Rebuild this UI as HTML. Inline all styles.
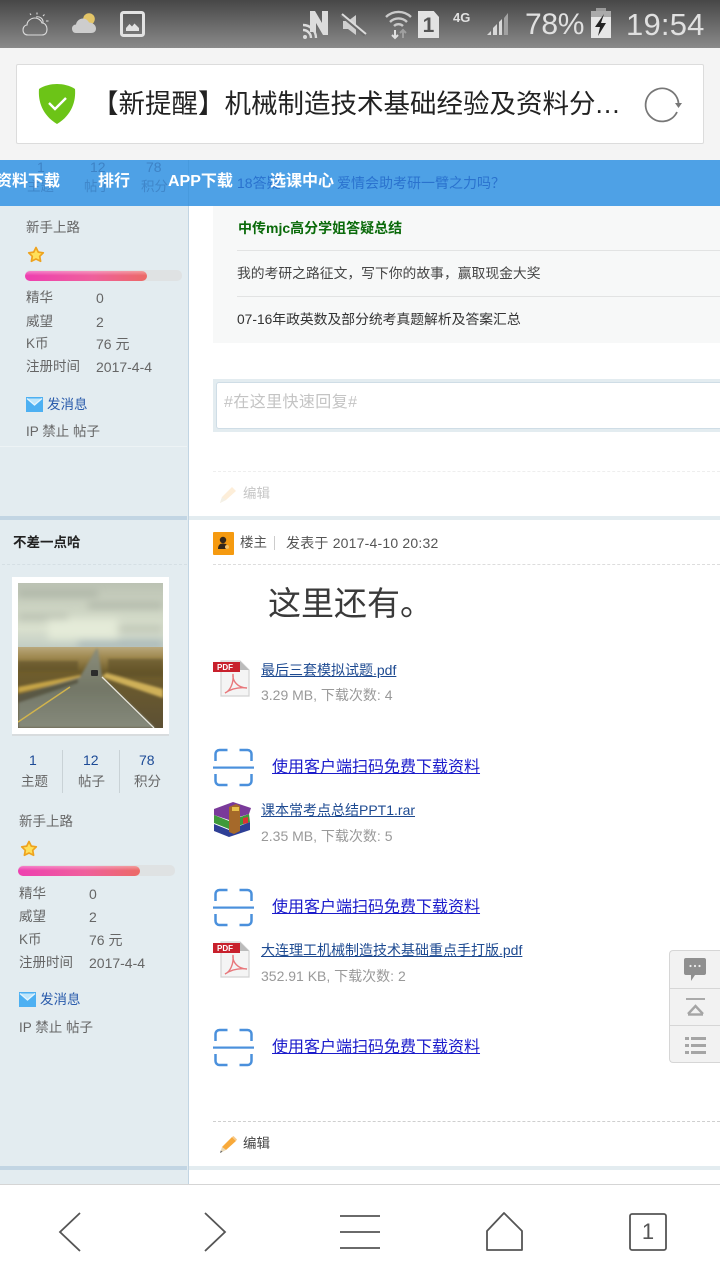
<!DOCTYPE html>
<html lang="zh"><head><meta charset="utf-8"><title>机械制造技术基础</title>
<style>
html,body{margin:0;padding:0;background:#fff}
#p{position:relative;width:720px;height:1280px;overflow:hidden;background:#fff;font-family:"Liberation Sans","Noto Sans CJK SC",sans-serif;color:#555}
.a{position:absolute}
.t{position:absolute;white-space:nowrap;line-height:20px;font-size:13.5px}
.b{filter:blur(.35px)}
svg{position:absolute;overflow:visible}
.l{color:#666}
.link{color:#1d4a91;text-decoration:underline;font-size:14px}
.dl{color:#1a1acb;text-decoration:underline;font-size:16px}
.g{color:#999;font-size:14px}
.nv{color:#fff;font-weight:bold;font-size:16px}
</style></head><body><div id="p">

<div class="b">
<div class="a" style="left:0;top:160px;width:188px;height:1025px;background:#e3ecf0"></div>
<div class="a" style="left:188px;top:160px;width:1px;height:1025px;background:#c2d5e3"></div>
<div class="a" style="left:0;top:516px;width:187px;height:4px;background:#c2d5e3"></div>
<div class="a" style="left:189px;top:516px;width:531px;height:4px;background:#e3ecf0"></div>
<div class="a" style="left:0;top:1166px;width:187px;height:4px;background:#c2d5e3"></div>
<div class="a" style="left:189px;top:1166px;width:531px;height:4px;background:#e3ecf0"></div>
<div class="a" style="left:0;top:446px;width:187px;height:1px;background:#edf3f5"></div>

<!-- first sidebar -->
<div class="t l" style="left:26px;top:218px">新手上路</div>
<svg style="left:27px;top:246px" width="18" height="18" viewBox="0 0 18 18"><path d="M9 1.500l2.300 4.600 5 .7-3.600 3.500.9 5L9 13l-4.600 2.300.9-5L1.700 6.800l5-.7z" fill="#ffe05a" stroke="#eea31f" stroke-width="1.700" stroke-linejoin="round"/></svg>
<div class="a" style="left:25px;top:270px;width:157px;height:11px;border-radius:5px;background:#dfe2e3"></div>
<div class="a" style="left:25px;top:271px;width:122px;height:10px;border-radius:5px;background:linear-gradient(180deg,rgba(255,255,255,.35),rgba(255,255,255,0) 45%),linear-gradient(90deg,#ee3fb0,#ef5f9c 55%,#ec6a66)"></div>
<div class="t l" style="left:26px;top:288px">精华</div><div class="t l" style="left:96px;top:288px;font-size:14px">0</div>
<div class="t l" style="left:26px;top:312px">威望</div><div class="t l" style="left:96px;top:312px;font-size:14px">2</div>
<div class="t l" style="left:26px;top:334px">K币</div><div class="t l" style="left:96px;top:334px;font-size:14px">76 元</div>
<div class="t l" style="left:26px;top:357px">注册时间</div><div class="t l" style="left:96px;top:357px;font-size:14px">2017-4-4</div>
<svg style="left:26px;top:397px" width="17" height="15" viewBox="0 0 17 15"><rect width="17" height="15" fill="#4db0f2"/><path d="M1 1.500L8.500 8 16 1.500" fill="#bfe6fb" stroke="#e5f5fe" stroke-width="1.300"/></svg>
<div class="t" style="left:47px;top:395px;color:#2a5bab">发消息</div>
<div class="t l" style="left:26px;top:422px">IP 禁止 帖子</div>

<!-- first post -->
<div class="a" style="left:213px;top:206px;width:507px;height:137px;background:#f7f8f8"></div>
<div class="t" style="left:238px;top:218px;color:#0a6a0a;font-weight:bold;font-size:14px">中传mjc高分学姐答疑总结</div>
<div class="a" style="left:237px;top:250px;width:483px;height:1px;background:#e2e3e3"></div>
<div class="t" style="left:237px;top:264px;color:#444;font-size:13.8px">我的考研之路征文，写下你的故事，赢取现金大奖</div>
<div class="a" style="left:237px;top:296px;width:483px;height:1px;background:#e2e3e3"></div>
<div class="t" style="left:237px;top:310px;color:#333;font-size:13.8px">07-16年政英数及部分统考真题解析及答案汇总</div>

<div class="a" style="left:213px;top:379px;width:507px;height:53px;background:#e3ecf0"></div>
<div class="a" style="left:217px;top:383px;width:503px;height:45px;background:#fff;border-radius:2px 0 0 2px;box-shadow:0 0 0 1px #cfdde6"></div>
<div class="t" style="left:224px;top:393px;color:#c4c4c4;font-size:16px;letter-spacing:.4px">#在这里快速回复#</div>
<div class="a" style="left:213px;top:471px;width:507px;border-top:1px dashed #eeeeee"></div>
<svg style="left:218px;top:485px" width="20" height="19" viewBox="0 0 20 19"><path d="M2 18l2-6L14 2l4 4L8 15z" fill="#fdeed9"/><path d="M2 18l2-6 4 3z" fill="#f3f0e6"/></svg>
<div class="t" style="left:243px;top:484px;color:#c6c6c6;font-size:13.5px">编辑</div>

<!-- second sidebar -->
<div class="t" style="left:13px;top:533px;color:#222;font-weight:bold;font-size:13.500px">不差一点哈</div>
<div class="a" style="left:2px;top:564px;width:185px;border-top:1px dashed #d5dfe4"></div>
<div class="a" style="left:12px;top:577px;width:157px;height:157px;background:#fff;box-shadow:0 2px 0 #d8dcde"></div>
<svg style="left:18px;top:583px;overflow:hidden" width="145" height="145" viewBox="0 0 145 145">
<defs>
<linearGradient id="sky" x1="0" y1="0" x2="0" y2="1"><stop offset="0" stop-color="#bbc2b3"/><stop offset=".35" stop-color="#cbd2c1"/><stop offset=".7" stop-color="#d9e0ce"/><stop offset="1" stop-color="#c0cbc3"/></linearGradient>
<linearGradient id="land" x1="0" y1="0" x2="0" y2="1"><stop offset="0" stop-color="#b9a87c"/><stop offset=".12" stop-color="#a08a52"/><stop offset=".3" stop-color="#6f5d2c"/><stop offset="1" stop-color="#5c5034"/></linearGradient>
<linearGradient id="rd" x1="0" y1="0" x2="0" y2="1"><stop offset="0" stop-color="#8b8d7a"/><stop offset=".5" stop-color="#737767"/><stop offset="1" stop-color="#868a7b"/></linearGradient>
<filter id="bl"><feGaussianBlur stdDeviation="4"/></filter>
<filter id="bs"><feGaussianBlur stdDeviation="1.200"/></filter>
</defs>
<rect width="145" height="66" fill="url(#sky)"/>
<g filter="url(#bl)">
<path d="M0 8h80v5H0zM70 20h75v5H70zM0 32h50v4H0zM95 44h50v4H95z" fill="#a2a99c" opacity=".8"/>
<path d="M30 36h70v20H30z" fill="#e6ecd9" opacity=".9"/>
<rect x="60" y="58" width="85" height="6" fill="#a4b4b6"/>
</g>
<rect y="64" width="145" height="81" fill="url(#land)"/>
<g filter="url(#bs)">
<path d="M0 78h60v10H0zM90 76h55v18H90z" fill="#5e4e24" opacity=".6"/>
<path d="M0 104L62 92 64 95 0 110z" fill="#c6a447"/>
<path d="M88 90L145 106v9L84 94z" fill="#cfb058"/>
<path d="M78 66h2L84 94 137 145H0V112L62 94z" fill="url(#rd)"/>
<path d="M0 112L60 96 60 100 0 120z" fill="#4e4a34" opacity=".7"/>
</g>
<path d="M0 139L52 104" stroke="#d2b44c" stroke-width="1.400" fill="none"/>
<path d="M84 94L136 145" stroke="#e8e8e0" stroke-width="1.300" fill="none"/>
<rect x="73" y="87" width="7" height="6" rx="1" fill="#2c2c2c"/>
</svg>
<div class="t" style="left:29px;top:750px;color:#1c4a96;font-size:14px">1</div>
<div class="t" style="left:83px;top:750px;color:#1c4a96;font-size:14px">12</div>
<div class="t" style="left:139px;top:750px;color:#1c4a96;font-size:14px">78</div>
<div class="t l" style="left:21px;top:772px">主题</div>
<div class="t l" style="left:78px;top:772px">帖子</div>
<div class="t l" style="left:134px;top:772px">积分</div>
<div class="a" style="left:62px;top:750px;width:1px;height:43px;background:#c9d2d6"></div>
<div class="a" style="left:119px;top:750px;width:1px;height:43px;background:#c9d2d6"></div>

<div class="t l" style="left:19px;top:812px">新手上路</div>
<svg style="left:20px;top:840px" width="18" height="18" viewBox="0 0 18 18"><path d="M9 1.500l2.300 4.600 5 .7-3.600 3.500.9 5L9 13l-4.600 2.300.9-5L1.700 6.800l5-.7z" fill="#ffe05a" stroke="#eea31f" stroke-width="1.700" stroke-linejoin="round"/></svg>
<div class="a" style="left:18px;top:865px;width:157px;height:11px;border-radius:5px;background:#dfe2e3"></div>
<div class="a" style="left:18px;top:866px;width:122px;height:10px;border-radius:5px;background:linear-gradient(180deg,rgba(255,255,255,.35),rgba(255,255,255,0) 45%),linear-gradient(90deg,#ee3fb0,#ef5f9c 55%,#ec6a66)"></div>
<div class="t l" style="left:19px;top:884px">精华</div><div class="t l" style="left:89px;top:884px;font-size:14px">0</div>
<div class="t l" style="left:19px;top:907px">威望</div><div class="t l" style="left:89px;top:907px;font-size:14px">2</div>
<div class="t l" style="left:19px;top:930px">K币</div><div class="t l" style="left:89px;top:930px;font-size:14px">76 元</div>
<div class="t l" style="left:19px;top:953px">注册时间</div><div class="t l" style="left:89px;top:953px;font-size:14px">2017-4-4</div>
<svg style="left:19px;top:992px" width="17" height="15" viewBox="0 0 17 15"><rect width="17" height="15" fill="#4db0f2"/><path d="M1 1.500L8.500 8 16 1.500" fill="#bfe6fb" stroke="#e5f5fe" stroke-width="1.300"/></svg>
<div class="t" style="left:40px;top:990px;color:#2a5bab">发消息</div>
<div class="t l" style="left:19px;top:1018px">IP 禁止 帖子</div>

<!-- second post -->
<div class="a" style="left:213px;top:532px;width:21px;height:23px;background:#f59a10;border-radius:1px"></div>
<svg style="left:213px;top:532px" width="21" height="23" viewBox="0 0 21 23"><circle cx="10" cy="8" r="3.200" fill="#33261a"/><path d="M5 17c0-4 2-5.500 5-5.500s5 1.500 5 5.500z" fill="#33261a"/><circle cx="14" cy="15" r="2" fill="#f6c26a"/></svg>
<div class="t" style="left:240px;top:533px;color:#555">楼主</div>
<div class="a" style="left:274px;top:536px;width:1px;height:14px;background:#ccc"></div>
<div class="t" style="left:286px;top:533px;color:#555;font-size:14px;letter-spacing:.2px">发表于 2017-4-10 20:32</div>
<div class="a" style="left:213px;top:564px;width:507px;border-top:1px dashed #dddddd"></div>
<div class="t" style="left:268px;top:582px;font-size:33px;line-height:44px;color:#3a3a3a">这里还有。</div>

<svg style="left:213px;top:660px" width="38" height="38" viewBox="0 0 38 38"><path d="M8 1h19l9 9v26H8z" fill="#f4f4f4" stroke="#d2d2d2" stroke-width="1.200"/><path d="M27 1v9h9z" fill="#bbb"/><path d="M0 2h27v10H0z" fill="#c8202c"/><text x="4" y="10" font-size="8" font-weight="bold" fill="#fff" font-family="Liberation Sans">PDF</text><path d="M12 33c5-2 9-10 8-19-1 7 5 14 14 14-8-1-16 1-22 5z" fill="none" stroke="#e8777b" stroke-width="1.400"/></svg>
<div class="t link" style="left:261px;top:660px">最后三套模拟试题.pdf</div>
<div class="t g" style="left:261px;top:685px">3.29 MB, 下载次数: 4</div>

<svg style="left:213px;top:748px" width="42" height="40" viewBox="0 0 42 40"><path d="M2.500 13V6a4 4 0 0 1 4-4h8M26.500 2h8a4 4 0 0 1 4 4v7M2.500 26v7a4 4 0 0 0 4 4h8M26.500 37h8a4 4 0 0 0 4-4v-7" fill="none" stroke="#4a90dc" stroke-width="2.500"/><rect y="18.500" width="41" height="2.200" fill="#4a90dc"/></svg>
<div class="t dl" style="left:272px;top:758px">使用客户端扫码免费下载资料</div>

<svg style="left:213px;top:801px" width="39" height="37" viewBox="0 0 39 37"><path d="M1 8L20 1l18 6-2 6-20 6-15-5z" fill="#7a3a9a"/><path d="M1 14l15 6 20-7 1 8-21 7-15-6z" fill="#3f9a3a"/><path d="M1 23l15 6 21-8 0 8-21 7-15-6z" fill="#2e3f96"/><path d="M16 6l7-3 4 2v25l-6 3-5-2z" fill="#a5692a"/><rect x="19" y="6" width="7" height="4" fill="#e8c04a"/><path d="M30 17l5-1v6l-5 1z" fill="#d33"/></svg>
<div class="t link" style="left:261px;top:800px">课本常考点总结PPT1.rar</div>
<div class="t g" style="left:261px;top:826px">2.35 MB, 下载次数: 5</div>

<svg style="left:213px;top:888px" width="42" height="40" viewBox="0 0 42 40"><path d="M2.500 13V6a4 4 0 0 1 4-4h8M26.500 2h8a4 4 0 0 1 4 4v7M2.500 26v7a4 4 0 0 0 4 4h8M26.500 37h8a4 4 0 0 0 4-4v-7" fill="none" stroke="#4a90dc" stroke-width="2.500"/><rect y="18.500" width="41" height="2.200" fill="#4a90dc"/></svg>
<div class="t dl" style="left:272px;top:898px">使用客户端扫码免费下载资料</div>

<svg style="left:213px;top:941px" width="38" height="38" viewBox="0 0 38 38"><path d="M8 1h19l9 9v26H8z" fill="#f4f4f4" stroke="#d2d2d2" stroke-width="1.200"/><path d="M27 1v9h9z" fill="#bbb"/><path d="M0 2h27v10H0z" fill="#c8202c"/><text x="4" y="10" font-size="8" font-weight="bold" fill="#fff" font-family="Liberation Sans">PDF</text><path d="M12 33c5-2 9-10 8-19-1 7 5 14 14 14-8-1-16 1-22 5z" fill="none" stroke="#e8777b" stroke-width="1.400"/></svg>
<div class="t link" style="left:261px;top:940px">大连理工机械制造技术基础重点手打版.pdf</div>
<div class="t g" style="left:261px;top:966px">352.91 KB, 下载次数: 2</div>

<svg style="left:213px;top:1028px" width="42" height="40" viewBox="0 0 42 40"><path d="M2.500 13V6a4 4 0 0 1 4-4h8M26.500 2h8a4 4 0 0 1 4 4v7M2.500 26v7a4 4 0 0 0 4 4h8M26.500 37h8a4 4 0 0 0 4-4v-7" fill="none" stroke="#4a90dc" stroke-width="2.500"/><rect y="18.500" width="41" height="2.200" fill="#4a90dc"/></svg>
<div class="t dl" style="left:272px;top:1038px">使用客户端扫码免费下载资料</div>

<div class="a" style="left:213px;top:1121px;width:507px;border-top:1px dashed #cfcfcf"></div>
<svg style="left:218px;top:1135px" width="20" height="19" viewBox="0 0 20 19"><path d="M4 12L14 2l4 4L8 15z" fill="#f8a93a"/><path d="M14 2l4 4 1-1.500L15.500 1z" fill="#f6c98a"/><path d="M2 18l2-6 4 3z" fill="#e9d8b6"/><path d="M2 18l.8-2.500 1.700 1.300z" fill="#666"/></svg>
<div class="t" style="left:243px;top:1134px;color:#444">编辑</div>

<!-- floating side tools -->
<div class="a" style="left:669px;top:950px;width:51px;height:113px;background:#f2f2f2;border:1px solid #d6d6d6;border-right:0;border-radius:4px 0 0 4px;box-sizing:border-box"></div>
<div class="a" style="left:670px;top:988px;width:50px;height:1px;background:#d6d6d6"></div>
<div class="a" style="left:670px;top:1025px;width:50px;height:1px;background:#d6d6d6"></div>
<svg style="left:684px;top:958px" width="22" height="24" viewBox="0 0 22 24"><path d="M2 0h18a2 2 0 0 1 2 2v13a2 2 0 0 1-2 2H11l-4 6v-6H2a2 2 0 0 1-2-2V2a2 2 0 0 1 2-2z" fill="#8f8f8f"/><circle cx="6.500" cy="8" r="1.100" fill="#eee"/><circle cx="11" cy="8" r="1.100" fill="#eee"/><circle cx="15.500" cy="8" r="1.100" fill="#eee"/></svg>
<svg style="left:686px;top:998px" width="20" height="20" viewBox="0 0 20 20"><rect x="0" y="0" width="19" height="2" fill="#aaa"/><path d="M2 16L9.500 8 17 16" fill="none" stroke="#a5a5a5" stroke-width="2.400"/><path d="M2 16.500h15" stroke="#a5a5a5" stroke-width="2.400"/></svg>
<svg style="left:685px;top:1037px" width="21" height="17" viewBox="0 0 21 17"><g fill="#a5a5a5"><rect y="0" width="4" height="3"/><rect x="6" y="0" width="15" height="3"/><rect y="7" width="4" height="3"/><rect x="6" y="7" width="15" height="3"/><rect y="14" width="4" height="3"/><rect x="6" y="14" width="15" height="3"/></g></svg>

<!-- top blue nav -->
<div class="a" style="left:0;top:160px;width:720px;height:46px;background:#4ea1e6"></div>
<div class="a" style="left:0;top:160px;width:720px;height:46px;font-size:14px">
 <div class="t" style="left:37px;top:-3px;opacity:.45;font-size:14px;color:#2a5e9e">1</div>
 <div class="t" style="left:90px;top:-3px;opacity:.45;font-size:14px;color:#2a5e9e">12</div>
 <div class="t" style="left:146px;top:-3px;opacity:.45;font-size:14px;color:#2a5e9e">78</div>
 <div class="t" style="left:27px;top:17px;opacity:.4;color:#2a5e9e">主题</div>
 <div class="t" style="left:84px;top:17px;opacity:.4;color:#2a5e9e">帖子</div>
 <div class="t" style="left:141px;top:17px;opacity:.4;color:#2a5e9e">积分</div>
 <div class="t" style="left:237px;top:13px;font-size:14px;color:#2a72ce">18答疑</div>
 <div class="t" style="left:337px;top:13px;font-size:14px;color:#2a72ce">爱情会助考研一臂之力吗？</div>
 <div class="a" style="left:188px;top:0;width:1px;height:46px;background:#479ade"></div>
</div>
<div class="t nv" style="left:-4px;top:172px">资料下载</div>
<div class="t nv" style="left:98px;top:172px">排行</div>
<div class="t nv" style="left:168px;top:172px">APP下载</div>
<div class="t nv" style="left:270px;top:172px">选课中心</div>

<!-- status bar -->
<div class="a" style="left:0;top:0;width:720px;height:48px;background:linear-gradient(#474747,#8a8a8a)"></div>
<svg style="left:22px;top:12px" width="28" height="24" viewBox="0 0 28 24" fill="none" stroke="#dcdcdc" stroke-width="1.100"><path d="M6 23C2 23 1 20 1 18C1 15 3 13 5 13C5 9 9 6 13 6C16 6 19 8 20 11C23 11 25 14 25 17C25 21 23 23 20 23Z"/><path d="M15 2.500v-2M21 4l1.500-1.500M24 9h2.500M9 3l-1-1.500"/><path d="M21 11a5.500 5.500 0 0 0-7-6"/></svg>
<svg style="left:71px;top:13px" width="26" height="20" viewBox="0 0 26 20"><circle cx="18" cy="6" r="5.800" fill="#e3c568"/><path d="M5 20C2 20 1 17.500 1 15.500C1 13 3 11.500 5 11.500C5.500 8 8.500 5.500 12 5.500C15 5.500 17 7.500 18 9.500C21 9.500 25 11.500 25 15.500C25 18.500 23 20 20 20Z" fill="#cdcdcd"/></svg>
<svg style="left:120px;top:11px" width="25" height="26" viewBox="0 0 25 26"><rect x="1.500" y="1.500" width="22" height="23" rx="2" fill="none" stroke="#e2e2e2" stroke-width="3"/><path d="M6 20v-3l3.500-4 2.500 2.500 2.500-3L19 17v3z" fill="#e2e2e2"/></svg>

<svg style="left:303px;top:10px" width="26" height="29" viewBox="0 0 26 29"><path d="M7 22V1h5l7 12V1h6v24h-5L13 13v9z" fill="#dcdcdc"/><path d="M0 15a13 13 0 0 1 13 13M0 20a8 8 0 0 1 8 8" fill="none" stroke="#dcdcdc" stroke-width="2.400"/><circle cx="2" cy="27" r="2" fill="#dcdcdc"/></svg>
<svg style="left:341px;top:14px" width="26" height="22" viewBox="0 0 26 22"><path d="M2 7h5l8-6v20l-8-6H2z" fill="#cfcfcf"/><path d="M0 1l24 20" stroke="#6c6c6c" stroke-width="3.200"/><path d="M1 0l24 20" stroke="#dcdcdc" stroke-width="2"/></svg>
<svg style="left:385px;top:10px" width="28" height="30" viewBox="0 0 28 30" fill="none" stroke="#c9c9c9" stroke-width="2.400"><path d="M1 7a18 18 0 0 1 25 0M5 12a12 12 0 0 1 17 0M9 16a6.500 6.500 0 0 1 9 0"/><path d="M10 20v8m-3-3l3 3 3-3" stroke="#e0e0e0" stroke-width="2"/><path d="M18 28v-8m-3 3l3-3 3 3" stroke="#9f9f9f" stroke-width="2"/></svg>
<div class="a" style="left:418px;top:11px;width:21px;height:27px;background:#e2e2e2;clip-path:polygon(0 0,75% 0,100% 22%,100% 100%,0 100%)"></div>
<div class="t" style="left:418px;top:13px;width:21px;text-align:center;color:#555;font-size:21px;line-height:26px;font-weight:bold">1</div>
<div class="t" style="left:453px;top:11px;color:#e0e0e0;font-size:13px;line-height:14px;font-weight:bold">4G</div>
<svg style="left:486px;top:12px" width="24" height="25" viewBox="0 0 24 25"><path d="M1 23l4-4v4zM7 23V16l4-4v11zM13 23V10l3-3v16z" fill="#d8d8d8"/><path d="M18 23V6l4-5v22z" fill="#a2a2a2"/></svg>
<div class="t" style="left:525px;top:7px;color:#e0e0e0;font-size:30px;line-height:36px;letter-spacing:-.3px">78%</div>
<svg style="left:590px;top:8px" width="22" height="31" viewBox="0 0 22 31"><rect x="6" y="0" width="10" height="4" fill="#9a9a9a"/><rect x="1" y="3" width="20" height="6" fill="#aaa"/><rect x="1" y="9" width="20" height="21" fill="#e6e6e6"/><path d="M14 6L5 19h5l-2 9 8-13h-5z" fill="#222"/></svg>
<div class="t" style="left:626px;top:7px;color:#e0e0e0;font-size:31px;line-height:36px;letter-spacing:.2px">19:54</div>

<!-- browser address bar -->
<div class="a" style="left:0;top:48px;width:720px;height:112px;background:#f4f4f4"></div>
<div class="a" style="left:16px;top:64px;width:688px;height:80px;background:#fff;border:1px solid #dcdcdc;box-sizing:border-box;border-radius:2px"></div>
<svg style="left:38px;top:84px" width="38" height="40" viewBox="0 0 38 40"><path d="M19 0c6 0 13 1.500 18 5 1 12-3 26-18 35C4 31 0 17 1 5 6 1.500 13 0 19 0z" fill="#6cc417"/><path d="M11 19l6 6 11-11" fill="none" stroke="#fff" stroke-width="2.400"/></svg>
<div class="t" style="left:92px;top:86px;color:#222;font-size:26.500px;line-height:36px">【新提醒】机械制造技术基础经验及资料分<span style="letter-spacing:1px">...</span></div>
<svg style="left:644px;top:86px" width="40" height="36" viewBox="0 0 40 36"><path d="M33 26A16.500 16.500 0 1 1 34.500 17" fill="none" stroke="#777" stroke-width="1.800"/><path d="M31 17h7l-3.500 5z" fill="#777"/></svg>

<!-- bottom toolbar -->
<div class="a" style="left:0;top:1184px;width:720px;height:96px;background:#fff;border-top:1px solid #d5d5d5;box-sizing:border-box"></div>
<svg style="left:0;top:1185px" width="720" height="95" viewBox="0 0 720 95" fill="none" stroke="#555" stroke-width="1.800">
<path d="M80 28L60 47l20 19"/>
<path d="M205 28l20 19-20 19"/>
<path d="M340 31h40M340 47h40M340 63h40"/>
<path d="M504 28l18 18v19h-35V46z" stroke-linejoin="round"/>
<rect x="630" y="29" width="36" height="36" rx="2"/>
</svg>
<div class="t" style="left:630px;top:1218px;width:36px;text-align:center;color:#555;font-size:22px;line-height:28px">1</div>
</div>
</div></body></html>
